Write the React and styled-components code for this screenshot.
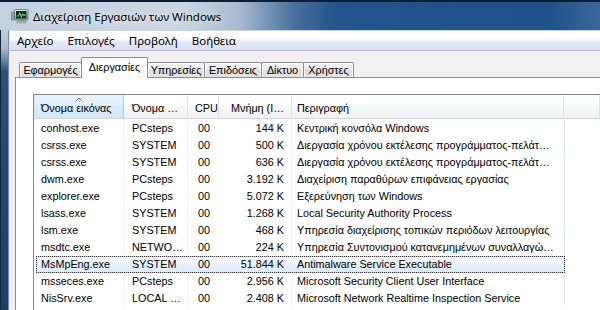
import React from 'react';
import styled, { createGlobalStyle } from 'styled-components';

const UI_FONT = '"Noto Sans", "Open Sans", "DejaVu Sans", sans-serif';
const LIST_FONT = '"Liberation Sans", Arial, "Noto Sans", sans-serif';

const Global = createGlobalStyle`
  html, body { margin: 0; padding: 0; background: #1d3d63; }
  body {
    width: 600px; height: 310px; overflow: hidden;
    font-family: ${UI_FONT};
    font-size: 11px; color: #000;
  }
`;

const Window = styled.div`
  width: 600px; height: 310px; display: flex; flex-direction: column; overflow: hidden;
`;

const TitleBar = styled.div`
  height: 30px; flex: none; box-sizing: border-box;
  display: flex; align-items: center; gap: 4px; padding-left: 11px;
  border-top: 2px solid #0c1d35;
  background: linear-gradient(90deg, #c4d1de 0%, #cbd7e3 30%, #a7bbd0 40%, #48709d 49%, #215489 56%, #1f5289 92%, #3b689a 100%);
`;

const TitleText = styled.span`
  font-size: 11.5px; color: #000;
  text-shadow: 0 0 6px rgba(255,255,255,0.9);
`;

const Body = styled.div`
  flex: 1; display: flex; min-height: 0;
`;

const Frame = styled.div`
  width: 10px; flex: none; box-sizing: border-box;
  background: linear-gradient(180deg, #c2cfdc 0px, #a9bbcd 18px, #2d4f76 42px, #1d3d63 100%);
  border-right: 1px solid #dfe5ec;
  box-shadow: inset -1px 0 0 #7d8e9f, inset 1px 0 0 #11263f;
`;

const Client = styled.div`
  flex: 1; display: flex; flex-direction: column; min-width: 0; background: #f0f0f0;
`;

const MenuBar = styled.div`
  height: 21px; flex: none; box-sizing: border-box; display: flex; align-items: center;
  border-top: 1px solid #c9d5e3; border-bottom: 1px solid #b3bacb;
  background: linear-gradient(180deg, #ffffff 0%, #fbfcfe 40%, #e4e8f5 60%, #d9dff1 100%);
  padding-top: 1px;
`;

const MenuItem = styled.span`
  padding: 0 7px; line-height: 18px; font-size: 11.5px;
`;

const Content = styled.div`
  flex: 1; display: flex; flex-direction: column; padding-left: 5px; min-height: 0;
`;

const TabStrip = styled.div`
  height: 27px; flex: none; display: flex; align-items: flex-end;
  padding-left: 4px; margin-bottom: -1px; position: relative; z-index: 1;
`;

const Tab = styled.div`
  box-sizing: border-box; width: ${p => p.$w}px; flex: none;
  margin-left: -1px;
  border: 1px solid #898c95; border-bottom: none;
  border-radius: 2px 2px 0 0;
  text-align: center; white-space: nowrap;
  font-family: ${LIST_FONT}; font-size: 10.8px;
  ${p => p.$active ? `
    height: 21px; padding-top: 2px; line-height: 15px;
    background: #fff; position: relative; z-index: 2;
  ` : `
    height: 15px; margin-bottom: 1px; line-height: 14px;
    background: linear-gradient(180deg, #f3f3f3 0%, #ebebeb 50%, #dedede 51%, #e3e3e3 100%);
    box-shadow: inset 1px 1px 0 #fcfcfc, inset -1px 0 0 #fcfcfc;
  `}
  &:first-child { margin-left: 0; }
`;

const Panel = styled.div`
  flex: 1; min-height: 0; display: flex; flex-direction: column;
  background: #fff; border-left: 1px solid #898c95; border-top: 1px solid #898c95;
  padding: 16px 0 0 17px;
`;

const ListView = styled.div`
  flex: 1; min-height: 0; background: #fff;
  border-left: 1px solid #828790; border-top: 1px solid #828790;
  display: flex; flex-direction: column; overflow: hidden;
  font-family: ${LIST_FONT}; font-size: 10.8px;
`;

const HeaderRow = styled.div`
  height: 24px; flex: none; display: flex; box-sizing: border-box;
  border-bottom: 1px solid #d5d5d5;
  background: linear-gradient(180deg, #ffffff 0%, #ffffff 45%, #f7f8f9 46%, #f1f2f4 100%);
`;

const HeaderCell = styled.div`
  position: relative; box-sizing: border-box; flex: ${p => p.$w ? 'none' : '1'};
  width: ${p => p.$w ? `${p.$w}px` : 'auto'};
  padding-top: 5px; line-height: 17px; white-space: nowrap; overflow: hidden;
  text-align: ${p => p.$align};
  padding-left: ${p => p.$align === 'left' ? p.$pad : 0}px;
  padding-right: ${p => p.$align === 'right' ? p.$pad : 0}px;
  border-right: 1px solid ${p => p.$sorted ? '#a5cde8' : '#e1e3e6'};
  background: ${p => p.$sorted ? 'linear-gradient(180deg, #e8f4fc 0%, #e1f0fb 45%, #d7ebf9 46%, #d2e8f8 100%)' : 'transparent'};
  box-shadow: ${p => p.$sorted ? 'inset 1px 0 0 #cfe6f6' : 'none'};
`;

const SortArrow = styled.svg`
  position: absolute; top: 2px; left: 50%; margin-left: -4px;
`;

const Rows = styled.div`
  padding-top: 1px; display: flex; flex-direction: column;
`;

const Row = styled.div`
  height: 17px; flex: none; display: flex;
`;

const RowBox = styled.div`
  margin-left: 2px; display: flex; box-sizing: border-box; height: 17px;
  ${p => p.$selected ? `
    outline: 1px dotted #333; outline-offset: -1px;
    background: linear-gradient(180deg, #f6faff 0%, #e9f2fc 50%, #dae8f9 100%);
    box-shadow: inset 0 0 0 1px #b9d4f2;
  ` : ''}
`;

const Cell = styled.div`
  flex: none; width: ${p => p.$w}px; box-sizing: border-box;
  line-height: 17px; white-space: nowrap; overflow: hidden;
  text-align: ${p => p.$align};
  padding-left: ${p => p.$align === 'left' ? p.$pad : 0}px;
  padding-right: ${p => p.$align === 'right' ? p.$pad : 0}px;
  box-shadow: inset -1px 0 0 ${p => p.$line};
`;

const headers = [
  { label: 'Όνομα εικόνας', w: 90, pad: 7, align: 'left', sorted: true },
  { label: 'Όνομα …', w: 64, pad: 8, align: 'left' },
  { label: 'CPU', w: 31, pad: 7, align: 'left' },
  { label: 'Μνήμη (Ι…', w: 73, pad: 7, align: 'right' },
  { label: 'Περιγραφή', w: 272, pad: 5, align: 'left' },
  { label: '', w: 0, pad: 0, align: 'left' },
];

const cols = [
  { key: 'name', w: 88, pad: 5, align: 'left', line: '#f1f3f6' },
  { key: 'user', w: 64, pad: 8, align: 'left', line: '#f1f3f6' },
  { key: 'cpu', w: 31, pad: 9, align: 'right', line: '#ffffff' },
  { key: 'mem', w: 73, pad: 8, align: 'right', line: '#f1f3f6' },
  { key: 'desc', w: 273, pad: 5, align: 'left', line: '#e3ebf7' },
];

const PROC = 'Διεργασία χρόνου εκτέλεσης προγράμματος-πελάτ…';

const data = [
  { name: 'conhost.exe', user: 'PCsteps', cpu: '00', mem: '144 K', desc: 'Κεντρική κονσόλα Windows' },
  { name: 'csrss.exe', user: 'SYSTEM', cpu: '00', mem: '500 K', desc: PROC },
  { name: 'csrss.exe', user: 'SYSTEM', cpu: '00', mem: '636 K', desc: PROC },
  { name: 'dwm.exe', user: 'PCsteps', cpu: '00', mem: '3.192 K', desc: 'Διαχείριση παραθύρων επιφάνειας εργασίας' },
  { name: 'explorer.exe', user: 'PCsteps', cpu: '00', mem: '5.072 K', desc: 'Εξερεύνηση των Windows' },
  { name: 'lsass.exe', user: 'SYSTEM', cpu: '00', mem: '1.268 K', desc: 'Local Security Authority Process' },
  { name: 'lsm.exe', user: 'SYSTEM', cpu: '00', mem: '468 K', desc: 'Υπηρεσία διαχείρισης τοπικών περιόδων λειτουργίας' },
  { name: 'msdtc.exe', user: 'NETWO…', cpu: '00', mem: '224 K', desc: 'Υπηρεσία Συντονισμού κατανεμημένων συναλλαγώ…' },
  { name: 'MsMpEng.exe', user: 'SYSTEM', cpu: '00', mem: '51.844 K', desc: 'Antimalware Service Executable', selected: true },
  { name: 'msseces.exe', user: 'PCsteps', cpu: '00', mem: '2.956 K', desc: 'Microsoft Security Client User Interface' },
  { name: 'NisSrv.exe', user: 'LOCAL …', cpu: '00', mem: '2.408 K', desc: 'Microsoft Network Realtime Inspection Service' },
];

const tabs = [
  { label: 'Εφαρμογές', w: 63 },
  { label: 'Διεργασίες', w: 67, active: true },
  { label: 'Υπηρεσίες', w: 58 },
  { label: 'Επιδόσεις', w: 58 },
  { label: 'Δίκτυο', w: 43 },
  { label: 'Χρήστες', w: 51 },
];

const menus = ['Αρχείο', 'Επιλογές', 'Προβολή', 'Βοήθεια'];

function TaskIcon() {
  return (
    <svg width="18" height="16" viewBox="0 0 18 16">
      <defs>
        <linearGradient id="mon" x1="0" y1="0" x2="0" y2="1">
          <stop offset="0" stopColor="#e8ecef" />
          <stop offset="1" stopColor="#8e979f" />
        </linearGradient>
      </defs>
      <rect x="0.5" y="4" width="2.5" height="8" fill="#9aa3ab" stroke="#6c757d" strokeWidth="0.6" />
      <rect x="3.5" y="1.5" width="13.5" height="10.5" rx="1" fill="url(#mon)" stroke="#5f6a74" strokeWidth="0.8" />
      <rect x="5" y="3" width="10.5" height="7.5" fill="#0d2a26" />
      <polyline points="5.5,8 7.5,8 8.8,5 10.3,9 11.8,6 13,7.5 15,6.5" fill="none" stroke="#3fe26a" strokeWidth="1.1" />
      <rect x="7.5" y="12" width="6" height="1.5" fill="#8c959d" />
      <rect x="6" y="13.5" width="9" height="1.5" fill="#b9c1c8" stroke="#6c757d" strokeWidth="0.4" />
    </svg>
  );
}

export default function App() {
  return (
    <>
      <Global />
      <Window>
        <TitleBar>
          <TaskIcon />
          <TitleText>Διαχείριση Εργασιών των Windows</TitleText>
        </TitleBar>
        <Body>
          <Frame />
          <Client>
            <MenuBar>
              {menus.map(m => <MenuItem key={m}>{m}</MenuItem>)}
            </MenuBar>
            <Content>
              <TabStrip>
                {tabs.map(t => <Tab key={t.label} $w={t.w} $active={t.active}>{t.label}</Tab>)}
              </TabStrip>
              <Panel>
                <ListView>
                  <HeaderRow>
                    {headers.map((h, i) => (
                      <HeaderCell key={i} $w={h.w} $pad={h.pad} $align={h.align} $sorted={h.sorted}>
                        {h.sorted && (
                          <SortArrow width="8" height="5" viewBox="0 0 8 5">
                            <polyline points="0.5,4.5 4,1 7.5,4.5" fill="none" stroke="#5a7ea6" strokeWidth="1" />
                          </SortArrow>
                        )}
                        {h.label}
                      </HeaderCell>
                    ))}
                  </HeaderRow>
                  <Rows>
                    {data.map((r, i) => (
                      <Row key={i}>
                        <RowBox $selected={r.selected}>
                          {cols.map(c => (
                            <Cell key={c.key} $w={c.w} $pad={c.pad} $align={c.align} $line={r.selected ? 'transparent' : c.line}>
                              {r[c.key]}
                            </Cell>
                          ))}
                        </RowBox>
                      </Row>
                    ))}
                  </Rows>
                </ListView>
              </Panel>
            </Content>
          </Client>
        </Body>
      </Window>
    </>
  );
}
